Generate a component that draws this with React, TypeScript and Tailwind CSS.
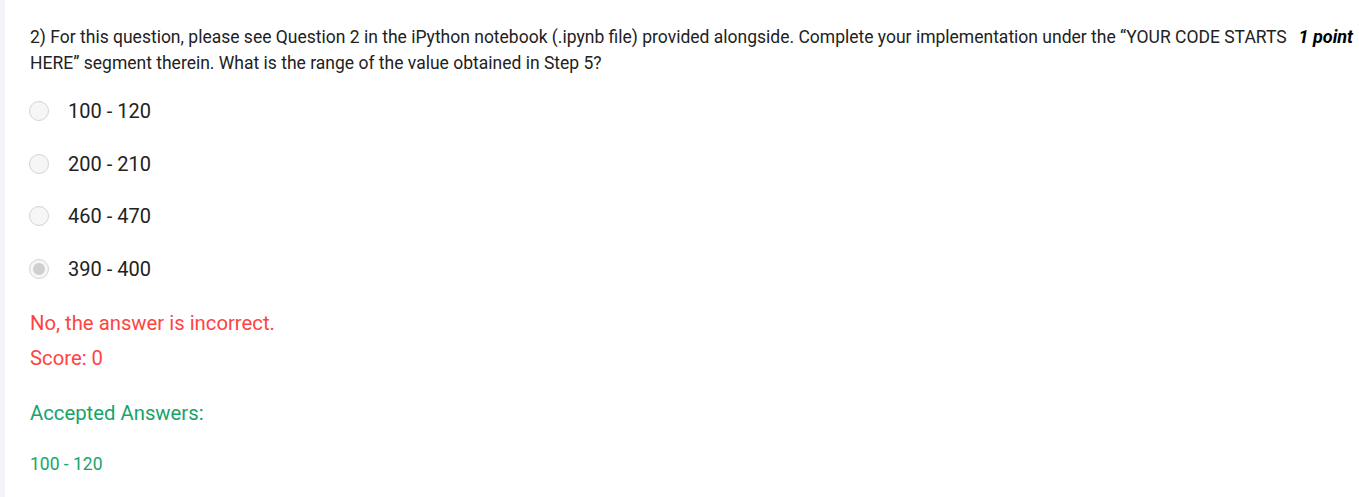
const options = ['100 - 120', '200 - 210', '460 - 470', '390 - 400']

export default function App() {
  const selected = 3
  return (
    <div className="flex min-h-[497px] w-full bg-white font-['Roboto',sans-serif] text-[#222]">
      <div className="w-[5px] shrink-0 bg-[#f4f5f8]" />
      <div className="flex-1 pl-[25px] pr-[6px] pt-[24px]">
        <div className="flex items-start gap-[10px]">
          <p className="flex-1 text-[17.5px] leading-[26px]">
            2) For this question, please see Question 2 in the iPython notebook (.ipynb file) provided alongside. Complete your implementation under the “YOUR CODE STARTS HERE” segment therein. What is the range of the value obtained in Step 5?
          </p>
          <span className="shrink-0 text-[18px] font-bold italic leading-[26px] text-black">1 point</span>
        </div>
        <div className="mt-[25px] flex flex-col gap-[32.7px]">
          {options.map((o, i) => (
            <label key={o} className="flex h-[20px] items-center">
              <span className="ml-[-1px] flex h-[20px] w-[20px] items-center justify-center rounded-full border border-[#d4d4d4] bg-[#f6f6f6]">
                {i === selected && <span className="h-[12px] w-[12px] rounded-full bg-[#cfcfcf]" />}
              </span>
              <span className="ml-[19px] text-[20px]">{o}</span>
            </label>
          ))}
        </div>
        <p className="mt-[30px] text-[20.3px] leading-[28px] text-[#ff4343]">No, the answer is incorrect.</p>
        <p className="mt-[7px] text-[20.3px] leading-[28px] text-[#ff4343]">Score: 0</p>
        <p className="mt-[27px] text-[20.3px] leading-[28px] text-[#17a468]">Accepted Answers:</p>
        <p className="mt-[24px] text-[17.5px] leading-[26px] text-[#17a468]">100 - 120</p>
      </div>
    </div>
  )
}
